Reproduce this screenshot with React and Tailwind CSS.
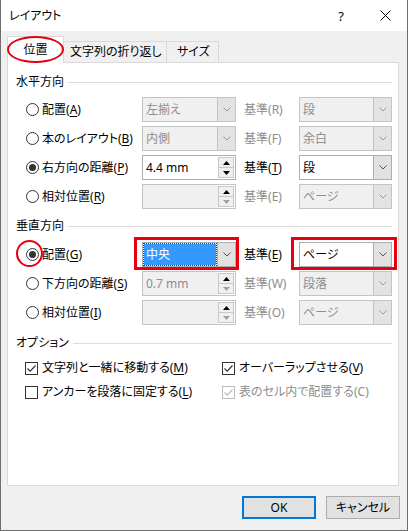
import React from "react";

const Chevron = ({ color }) => (
  <svg width="8" height="5" viewBox="0 0 8 5">
    <path d="M0.5 0.5 L4 4 L7.5 0.5" fill="none" stroke={color} strokeWidth="1" />
  </svg>
);

const Tri = ({ up, color }) => (
  <svg width="7" height="4" viewBox="0 0 7 4">
    <path d={up ? "M3.5 0 L7 4 L0 4Z" : "M0 0 L7 0 L3.5 4Z"} fill={color} />
  </svg>
);

const Radio = ({ checked, disabled }) => (
  <span
    className={`flex items-center justify-center w-[13px] h-[13px] shrink-0 rounded-full border bg-white ${
      disabled ? "border-[#bcbcbc]" : "border-[#333333]"
    }`}
  >
    {checked && <span className="w-[7px] h-[7px] rounded-full bg-[#333333]" />}
  </span>
);

const Check = ({ checked, disabled }) => (
  <span
    className={`flex items-center justify-center w-[13px] h-[13px] shrink-0 border bg-white ${
      disabled ? "border-[#bcbcbc]" : "border-[#333333]"
    }`}
  >
    {checked && (
      <svg width="11" height="11" viewBox="0 0 11 11">
        <path
          d="M1.5 5.5 L4.2 8.2 L9.5 2.5"
          fill="none"
          stroke={disabled ? "#bcbcbc" : "#333333"}
          strokeWidth="1.2"
        />
      </svg>
    )}
  </span>
);

// disabled labels drop the accelerator underline
const Label = ({ text, k, disabled }) => (
  <span className={`whitespace-nowrap ${disabled ? "text-[#8d8d8d]" : "text-black"}`}>
    {text}(<span className={disabled ? "" : "underline underline-offset-[2px]"}>{k}</span>)
  </span>
);

const Combo = ({ value, disabled, w, focus }) => (
  <div
    className={`flex h-[25px] ${w} border ${
      disabled ? "border-[#c4c4c4] bg-[#f0f0f0]" : "border-[#adadad] bg-white"
    }`}
  >
    <div className="flex-1 flex items-center pl-[1px] pr-[1px]">
      {focus ? (
        <div className="flex items-center w-full h-[21px] bg-[#3399ff] text-white pl-[2px] outline-1 outline-dotted outline-[#333333]">
          {value}
        </div>
      ) : (
        <span className={`pl-[2px] ${disabled ? "text-[#8d8d8d]" : "text-black"}`}>{value}</span>
      )}
    </div>
    <div
      className={`w-[18px] flex items-center justify-center border-l ${
        disabled ? "bg-[#e3e3e3] border-[#c4c4c4]" : "bg-[#e1e1e1] border-[#adadad]"
      }`}
    >
      <Chevron color={disabled ? "#9a9a9a" : "#555555"} />
    </div>
  </div>
);

const Spin = ({ value, disabled }) => (
  <div
    className={`flex h-[25px] w-[94px] border ${
      disabled ? "border-[#c4c4c4] bg-[#f0f0f0]" : "border-[#adadad] bg-white"
    }`}
  >
    <div className={`flex-1 flex items-center pl-[3px] ${disabled ? "text-[#8d8d8d]" : "text-black"}`}>
      {value}
    </div>
    <div className="w-[17px] flex flex-col py-[1px] pr-[1px] bg-white">
      <div className="flex-1 flex items-center justify-center bg-[#f0f0f0] border border-[#c8c8c8]">
        <Tri up color="#000000" />
      </div>
      <div className="flex-1 flex items-center justify-center bg-[#f0f0f0] border border-t-0 border-[#c8c8c8]">
        <Tri color={disabled ? "#a0a0a0" : "#000000"} />
      </div>
    </div>
  </div>
);

const Header = ({ text, mt }) => (
  <div className={`flex items-center h-[16px] ${mt}`}>
    <span className="whitespace-nowrap">{text}</span>
    <div className="flex-1 h-px bg-[#dcdcdc] ml-[4px]" />
  </div>
);

const Row = ({ radio, label, k, field, baseKey, baseDisabled, combo }) => (
  <div className="flex items-center h-[25px]">
    <div className="w-[126px] flex items-center pl-[10px] gap-[3px]">
      <Radio checked={radio} />
      <Label text={label} k={k} />
    </div>
    {field}
    <div className="w-[63px] pl-[8px]">
      <Label text="基準" k={baseKey} disabled={baseDisabled} />
    </div>
    {combo}
  </div>
);

const Option = ({ checked, disabled, text, k, w }) => (
  <div className={`flex items-center gap-[4px] pl-[9px] ${w}`}>
    <Check checked={checked} disabled={disabled} />
    <Label text={text} k={k} disabled={disabled} />
  </div>
);

export default function App() {
  return (
    <div className="relative w-[408px] h-[531px] text-[12px] leading-[16px] [font-family:'Noto_Sans','Noto_Sans_CJK_JP',sans-serif] [font-feature-settings:'palt']">
      <div className="w-[408px] h-[531px] flex flex-col bg-[#f0f0f0] border-x border-b border-[#6f6f6f]">
        {/* Title bar */}
        <div className="h-[31px] bg-white flex items-center pl-[8px] shrink-0">
          <span className="flex-1">レイアウト</span>
          <span className="text-[13px] mr-[36px]">?</span>
          <svg width="11" height="11" viewBox="0 0 11 11" className="mr-[16px]">
            <path d="M0.5 0.5 L10.5 10.5 M10.5 0.5 L0.5 10.5" stroke="#000" strokeWidth="1" />
          </svg>
        </div>

        <div className="pl-[6px] pt-[5px]">
          {/* Tabs */}
          <div className="flex items-end h-[26px]">
            <div className="relative z-10 w-[57px] h-[27px] -mb-px bg-white border-x border-t border-[#d9d9d9] flex items-center justify-center pb-[1px]">
              位置
            </div>
            <div className="w-[103px] h-[21px] bg-[#f0f0f0] border-r border-t border-[#d9d9d9] flex items-center pl-[6px]">
              文字列の折り返し
            </div>
            <div className="w-[52px] h-[21px] bg-[#f0f0f0] border-r border-t border-[#d9d9d9] flex items-center pl-[10px]">
              サイズ
            </div>
          </div>

          {/* Panel */}
          <div className="w-[392px] h-[424px] bg-white border border-[#d9d9d9] pl-[8px] pr-[6px]">
            <Header text="水平方向" mt="mt-[11px]" />
            <div className="flex flex-col gap-[4px] mt-[7px]">
              <Row
                label="配置"
                k="A"
                field={<Combo value="左揃え" disabled w="w-[94px]" />}
                baseKey="R"
                baseDisabled
                combo={<Combo value="段" disabled w="w-[93px]" />}
              />
              <Row
                label="本のレイアウト"
                k="B"
                field={<Combo value="内側" disabled w="w-[94px]" />}
                baseKey="F"
                baseDisabled
                combo={<Combo value="余白" disabled w="w-[93px]" />}
              />
              <Row
                radio
                label="右方向の距離"
                k="P"
                field={<Spin value="4.4 mm" />}
                baseKey="T"
                combo={<Combo value="段" w="w-[93px]" />}
              />
              <Row
                label="相対位置"
                k="R"
                field={<Spin value="" disabled />}
                baseKey="E"
                baseDisabled
                combo={<Combo value="ページ" disabled w="w-[93px]" />}
              />
            </div>

            <Header text="垂直方向" mt="mt-[9px]" />
            <div className="flex flex-col gap-[4px] mt-[8px]">
              <Row
                radio
                label="配置"
                k="G"
                field={<Combo value="中央" focus w="w-[94px]" />}
                baseKey="E"
                combo={<Combo value="ページ" w="w-[93px]" />}
              />
              <Row
                label="下方向の距離"
                k="S"
                field={<Spin value="0.7 mm" disabled />}
                baseKey="W"
                baseDisabled
                combo={<Combo value="段落" disabled w="w-[93px]" />}
              />
              <Row
                label="相対位置"
                k="I"
                field={<Spin value="" disabled />}
                baseKey="O"
                baseDisabled
                combo={<Combo value="ページ" disabled w="w-[93px]" />}
              />
            </div>

            <Header text="オプション" mt="mt-[10px]" />
            <div className="flex flex-col gap-[8px] mt-[9px]">
              <div className="flex h-[16px]">
                <Option checked text="文字列と一緒に移動する" k="M" w="w-[197px]" />
                <Option checked text="オーバーラップさせる" k="V" />
              </div>
              <div className="flex h-[16px]">
                <Option text="アンカーを段落に固定する" k="L" w="w-[197px]" />
                <Option checked disabled text="表のセル内で配置する" k="C" />
              </div>
            </div>
          </div>
        </div>

        {/* Buttons */}
        <div className="flex justify-end gap-[10px] pr-[7px] mt-[10px]">
          <button className="w-[74px] h-[23px] bg-[#e1e1e1] border-2 border-[#0078d7] flex items-center justify-center">
            OK
          </button>
          <button className="w-[74px] h-[23px] bg-[#e1e1e1] border border-[#adadad] flex items-center justify-center">
            キャンセル
          </button>
        </div>
      </div>

      {/* Red annotations */}
      <div className="absolute z-20 left-[7px] top-[36px] w-[57px] h-[27px] rounded-[50%] border-2 border-[#e60012]" />
      <div className="absolute z-20 left-[16px] top-[240px] w-[27px] h-[27px] rounded-full border-2 border-[#e60012]" />
      <div className="absolute z-20 left-[134px] top-[237px] w-[105px] h-[33px] border-[3px] border-[#e60012]" />
      <div className="absolute z-20 left-[291px] top-[237px] w-[106px] h-[33px] border-[3px] border-[#e60012]" />
    </div>
  );
}
